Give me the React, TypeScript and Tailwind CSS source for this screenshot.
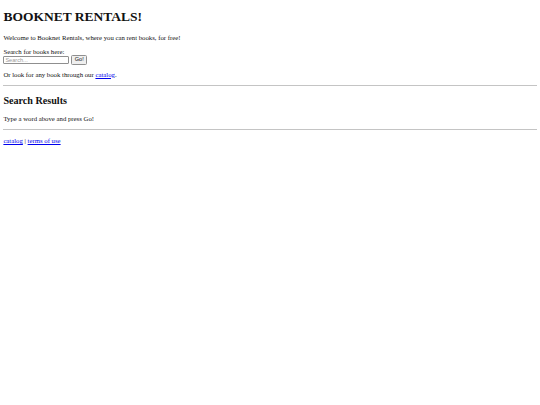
import { useState } from "react";

export default function App() {
  const [query, setQuery] = useState("");

  return (
    <div
      className="min-h-[405px] bg-white px-[3.375px] pt-[9.045px] text-[6.75px] leading-[7.76px] text-[#111]"
      style={{ fontFamily: '"Liberation Serif", "Times New Roman", serif' }}
    >
      <h1 className="mb-[9.045px] text-[13.5px] font-bold leading-[15.5px]">
        BOOKNET RENTALS!
      </h1>
      <p className="my-[6.75px]">
        Welcome to Booknet Rentals, where you can rent books, for free!
      </p>

      <form className="my-[6.75px]" onSubmit={(e) => e.preventDefault()}>
        <label htmlFor="search" className="block">
          Search for books here:
        </label>
        <div className="flex h-[8.2px] items-center gap-[1.9px]">
          <input
            id="search"
            value={query}
            onChange={(e) => setQuery(e.target.value)}
            placeholder="Search..."
            className="h-[8.6px] w-[66px] rounded-[1px] border-[0.6px] border-[#8f8f8f] bg-white px-[1px] text-[5.6px] leading-none outline-none placeholder:text-[#9a9a9a]"
            style={{ fontFamily: '"Liberation Sans", Arial, sans-serif' }}
          />
          <button
            type="submit"
            className="h-[9.2px] w-[16px] rounded-[1.5px] border-[0.6px] border-[#8f8f8f] bg-[#efefef] text-[5.6px] leading-none"
            style={{ fontFamily: '"Liberation Sans", Arial, sans-serif' }}
          >
            Go!
          </button>
        </div>
      </form>

      <p className="my-[6.75px]">
        Or look for any book through our{" "}
        <a href="#" className="text-[#0000ee] underline">
          catalog
        </a>
        .
      </p>

      <hr className="my-[3.375px] border-0 border-t border-[#c4c4c4]" />

      <h2 className="my-[8.4px] text-[10.125px] font-bold leading-[11.65px]">
        Search Results
      </h2>
      <p className="my-[6.75px]">Type a word above and press Go!</p>

      <hr className="my-[3.375px] border-0 border-t border-[#c4c4c4]" />

      <p className="my-[6.75px]">
        <a href="#" className="text-[#0000ee] underline">
          catalog
        </a>{" "}
        |{" "}
        <a href="#" className="text-[#0000ee] underline">
          terms of use
        </a>
      </p>
    </div>
  );
}
